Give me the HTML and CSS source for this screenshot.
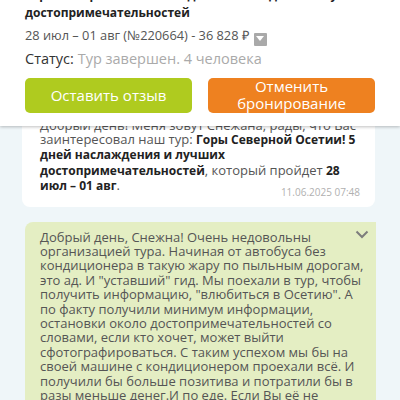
FILE: index.html
```html
<!DOCTYPE html>
<html lang="ru">
<head>
  <meta charset="UTF-8" />
  <title>Заказ №220664</title>
  <link rel="stylesheet" href="styles.css">
</head>
<body>
  <header class="order">
    <h1>Горы Северной Осетии! 5 дней наслаждения и лучших<br>достопримечательностей</h1>
    <p class="dates">28 июл – 01 авг (№220664) - 36 828 ₽<span class="toggle"><svg width="8" height="6" viewBox="0 0 8 6"><path d="M0 0h8L4 5z" fill="#fff"/></svg></span></p>
    <p class="status">Статус: <span>Тур завершен. 4 человека</span></p>
    <div class="actions">
      <a class="btn btn-review" href="#">Оставить отзыв</a>
      <a class="btn btn-cancel" href="#">Отменить<br>бронирование</a>
    </div>
  </header>

  <main class="chat">
    <div class="msg msg-in">
      <p>Добрый день! Меня зовут Снежана, рады, что Вас заинтересовал наш тур: <b>Горы Северной Осетии! 5 дней наслаждения и лучших достопримечательностей</b>, который пройдет <b>28 июл – 01 авг</b>.</p>
      <time>11.06.2025 07:48</time>
    </div>

    <div class="msg msg-out">
      <p>Добрый день, Снежна! Очень недовольны организацией тура. Начиная от автобуса без кондиционера в такую жару по пыльным дорогам, это ад. И "уставший" гид. Мы поехали в тур, чтобы получить информацию, "влюбиться в Осетию". А по факту получили минимум информации, остановки около достопримечательностей со словами, если кто хочет, может выйти сфотографироваться. С таким успехом мы бы на своей машине с кондиционером проехали всё. И получили бы больше позитива и потратили бы в разы меньше денег.И по еде. Если Вы её не организуете, то хотя бы предупреждайте заранее.</p>
      <svg class="chevron" width="14" height="9" viewBox="0 0 14 9"><path d="M1.5 1.5L7 7l5.5-5.5" fill="none" stroke="#7d7d7d" stroke-width="2"/></svg>
    </div>
  </main>
</body>
</html>
```

FILE: styles.css
```css
body {
  margin: 0;
  font-family: "Open Sans", sans-serif;
  background: #eff6f9;
  color: #333;
  height: 400px;
  overflow: hidden;
}
.order {
  position: relative;
  z-index: 1;
  background: #fff;
  margin-top: -14px;
  padding: 0 25px 13px;
  box-shadow: 0 1px 3px rgba(0,0,0,0.25);
}
.order h1 {
  margin: 0;
  font-size: 12px;
  line-height: 18px;
  font-weight: 700;
  color: #222;
  white-space: nowrap;
}
.dates {
  margin: 5px 0 0;
  font-size: 12.8px;
  line-height: 16px;
  color: #555;
}
.toggle {
  display: inline-flex;
  align-items: center;
  justify-content: center;
  vertical-align: -2px;
  width: 13px;
  height: 13px;
  margin-left: 5px;
  background: #a9a9a9;
  border-radius: 1px;
}
.status {
  margin: 3px 0 0;
  font-size: 14.5px;
  line-height: 20px;
  color: #333;
}
.status span {
  color: #aaa;
}
.actions {
  display: grid;
  grid-template-columns: 1fr 1fr;
  gap: 16px;
  margin-top: 9px;
}
.btn {
  display: flex;
  align-items: center;
  justify-content: center;
  height: 35px;
  border-radius: 5px;
  color: #fff;
  text-decoration: none;
  text-align: center;
  font-size: 15px;
  line-height: 17px;
}
.btn-review {
  background: #afcb1f;
}
.btn-cancel {
  background: #ee8120;
}
.chat {
  margin-top: -8px;
  padding: 0 25px 0 22px;
}
.msg {
  border-radius: 8px;
  position: relative;
}
.msg p {
  margin: 0;
  font-size: 13px;
  line-height: 14.4px;
  color: #555;
}
.msg b {
  font-size: 12px;
  color: #222;
}
.msg-in {
  background: #fff;
  padding: 0 6px 9px 18px;
  border-radius: 0 0 8px 8px;
}
.msg-in time {
  display: block;
  margin-top: -8px;
  text-align: right;
  padding-right: 9px;
  font-size: 10px;
  line-height: 12px;
  color: #b0b0b0;
}
.msg-out {
  margin: 15px -1px 0 3px;
  background: #e4eec3;
  padding: 8px 8px 10px 15px;
  border-radius: 8px 0 0 8px;
}
.chevron {
  position: absolute;
  top: 8px;
  right: 7px;
}
```
